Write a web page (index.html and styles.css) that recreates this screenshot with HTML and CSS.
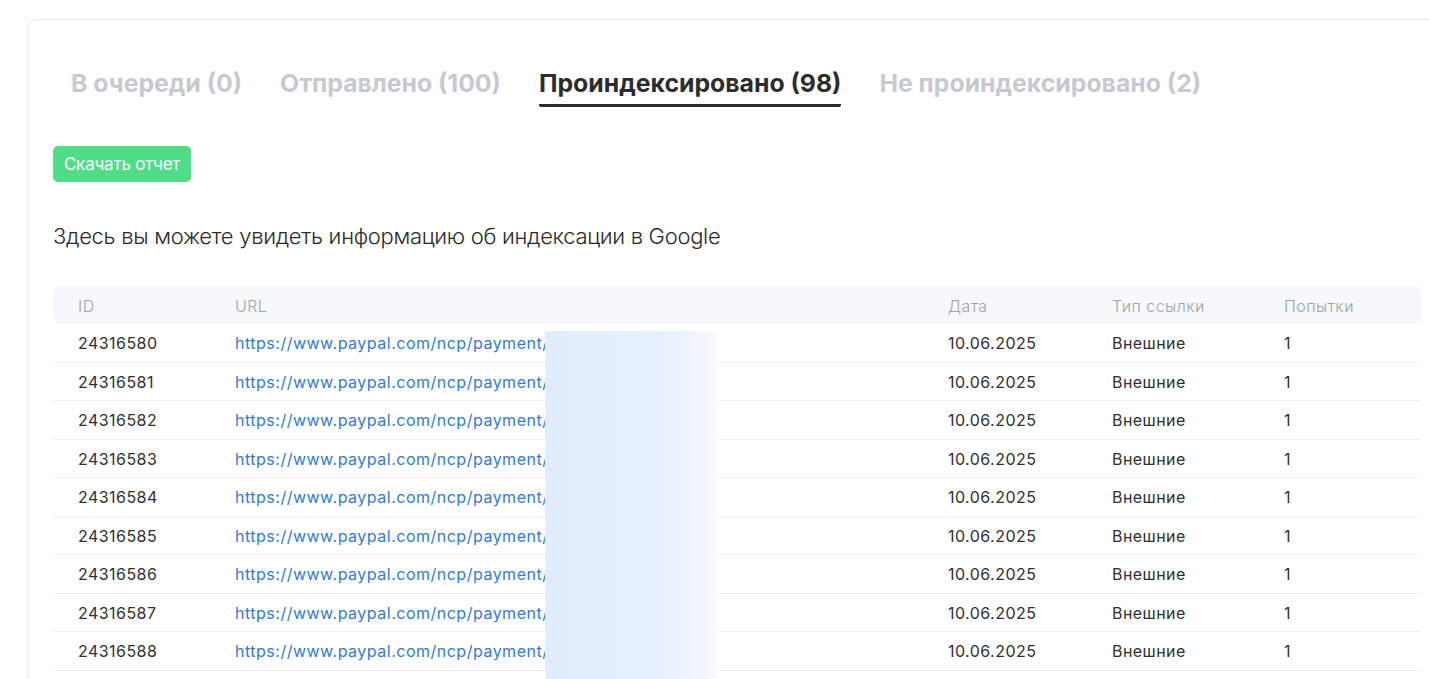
FILE: index.html
```html
<!DOCTYPE html>
<html lang="ru">
<head>
<meta charset="utf-8">
<title>Индексация</title>
<link rel="stylesheet" href="styles.css">
</head>
<body>
<div class="card">
  <nav class="tabs">
    <span class="tab">В очереди (0)</span>
    <span class="tab">Отправлено (100)</span>
    <span class="tab active">Проиндексировано (98)</span>
    <span class="tab">Не проиндексировано (2)</span>
  </nav>
  <button class="btn">Скачать отчет</button>
  <p class="desc">Здесь вы можете увидеть информацию об индексации в Google</p>
  <div class="table">
    <div class="row head">
      <span>ID</span><span>URL</span><span>Дата</span><span>Тип ссылки</span><span>Попытки</span>
    </div>
    <div class="body">
      <div class="row"><span>24316580</span><a class="url">https://www.paypal.com/ncp/payment/QK7XH2LMN8PZR</a><span>10.06.2025</span><span>Внешние</span><span>1</span></div>
      <div class="row"><span>24316581</span><a class="url">https://www.paypal.com/ncp/payment/T4WB9DFJ3KCVY</a><span>10.06.2025</span><span>Внешние</span><span>1</span></div>
      <div class="row"><span>24316582</span><a class="url">https://www.paypal.com/ncp/payment/M8RN2QXLZ6HBT</a><span>10.06.2025</span><span>Внешние</span><span>1</span></div>
      <div class="row"><span>24316583</span><a class="url">https://www.paypal.com/ncp/payment/P3YC7KWVD9GSE</a><span>10.06.2025</span><span>Внешние</span><span>1</span></div>
      <div class="row"><span>24316584</span><a class="url">https://www.paypal.com/ncp/payment/H6JL4TZQB2NFA</a><span>10.06.2025</span><span>Внешние</span><span>1</span></div>
      <div class="row"><span>24316585</span><a class="url">https://www.paypal.com/ncp/payment/R9XK5MCWP7DUV</a><span>10.06.2025</span><span>Внешние</span><span>1</span></div>
      <div class="row"><span>24316586</span><a class="url">https://www.paypal.com/ncp/payment/B2GE8YNQS4LTX</a><span>10.06.2025</span><span>Внешние</span><span>1</span></div>
      <div class="row"><span>24316587</span><a class="url">https://www.paypal.com/ncp/payment/W5FZ3HRKJ8CMP</a><span>10.06.2025</span><span>Внешние</span><span>1</span></div>
      <div class="row"><span>24316588</span><a class="url">https://www.paypal.com/ncp/payment/N7VD6QLBX3YWE</a><span>10.06.2025</span><span>Внешние</span><span>1</span></div>
      <div class="mask"></div>
    </div>
  </div>
</div>
</body>
</html>
```
FILE: styles.css
```css
html, body {
  margin: 0;
  padding: 0;
  background: #fff;
  overflow: hidden;
}
body {
  font-family: Inter, "Noto Sans", sans-serif;
  color: #333;
}
.card {
  margin: 19px -40px 0 27px;
  border: 1px solid #ebebeb;
  border-radius: 8px;
  padding: 37px 25px 0 25px;
  width: 1369px;
  min-height: 700px;
}
.tabs {
  display: flex;
  gap: 38px;
  padding-left: 18px;
  height: 50px;
}
.tab {
  font-size: 24.8px;
  font-weight: 700;
  color: #c6cad0;
  line-height: 52px;
  height: 47px;
  letter-spacing: 0;
}
.tab.active {
  color: #2c2c2c;
  border-bottom: 3px solid #2c2c2c;
  border-radius: 0 0 2px 2px;
}
.btn {
  display: block;
  margin-top: 39px;
  background: #4fdd87;
  color: #fff;
  border: 0;
  border-radius: 5px;
  height: 36px;
  width: 138px;
  padding: 0;
  font-family: Inter, "Noto Sans", sans-serif;
  font-size: 17px;
  letter-spacing: -0.2px;
}
.desc {
  margin: 39px 0 0 0;
  font-size: 22px;
  font-weight: 300;
  color: #2a2a2a;
  line-height: 30px;
  letter-spacing: -0.3px;
}
.table {
  margin-top: 35px;
  width: 1369px;
}
.row {
  display: grid;
  grid-template-columns: 157px 713px 164px 172px 1fr;
  padding-left: 25px;
  padding-top: 1px;
  height: 36.5px;
  align-items: center;
  font-size: 16px;
  color: #2f2f2f;
  letter-spacing: 0.45px;
  border-bottom: 1px solid #f1f2f4;
}
.row.head {
  height: 37px;
  background: #f6f8fb;
  border-radius: 8px;
  border-bottom: 0;
  color: #a0a3a8;
  font-weight: 300;
}
.body {
  position: relative;
}
.url {
  color: #2f7ae0;
  white-space: nowrap;
  overflow: hidden;
  letter-spacing: 0.5px;
}
.mask {
  position: absolute;
  left: 492px;
  top: 7px;
  width: 172px;
  bottom: -10px;
  background: linear-gradient(to right, #e2edfc 0%, #e6effd 60%, #eef4fe 85%, #f8fbff 100%);
}
```
